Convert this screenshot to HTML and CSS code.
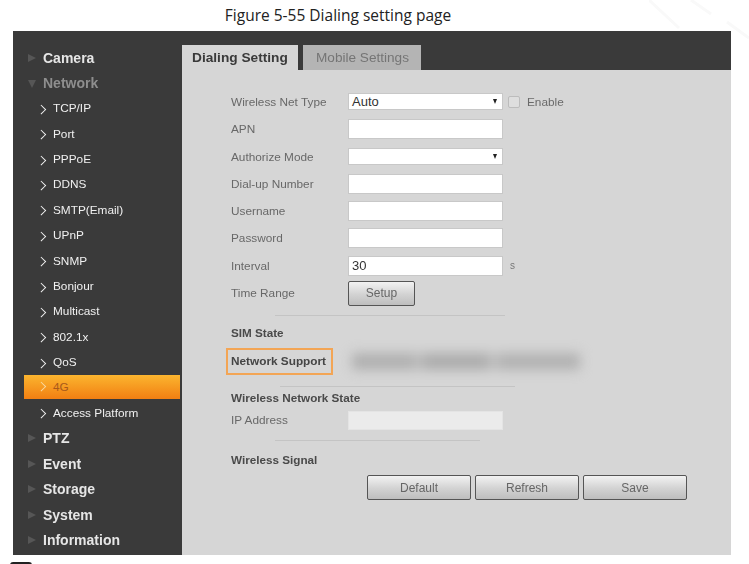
FILE: index.html
```html
<!DOCTYPE html>
<html lang="en">
<head>
<meta charset="utf-8">
<title>Dialing setting page</title>
<link rel="stylesheet" href="styles.css">
</head>
<body>
<svg class="watermark" width="100" height="40" viewBox="0 0 100 40" aria-hidden="true">
  <path d="M0 0L30 28M42 0L62 14M78 22L100 38" fill="none" stroke="#f9f9f9" stroke-width="3"/>
</svg>
<p class="caption">Figure 5-55 Dialing setting page</p>
<div class="frame">
  <nav class="sidebar">
    <div class="item top closed">Camera</div>
    <div class="item top open">Network</div>
    <div class="item sub">TCP/IP</div>
    <div class="item sub">Port</div>
    <div class="item sub">PPPoE</div>
    <div class="item sub">DDNS</div>
    <div class="item sub">SMTP(Email)</div>
    <div class="item sub">UPnP</div>
    <div class="item sub">SNMP</div>
    <div class="item sub">Bonjour</div>
    <div class="item sub">Multicast</div>
    <div class="item sub">802.1x</div>
    <div class="item sub">QoS</div>
    <div class="item sub active">4G</div>
    <div class="item sub">Access Platform</div>
    <div class="item top closed">PTZ</div>
    <div class="item top closed">Event</div>
    <div class="item top closed">Storage</div>
    <div class="item top closed">System</div>
    <div class="item top closed">Information</div>
  </nav>
  <main class="main">
    <div class="tabs">
      <div class="tab current">Dialing Setting</div>
      <div class="tab other">Mobile Settings</div>
    </div>
    <div class="panel">
      <div class="form">
        <div class="row"><span class="label">Wireless Net Type</span><span class="field select">Auto</span><span class="check"></span><span class="label-after">Enable</span></div>
        <div class="row"><span class="label">APN</span><span class="field"></span></div>
        <div class="row"><span class="label">Authorize Mode</span><span class="field select"></span></div>
        <div class="row"><span class="label">Dial-up Number</span><span class="field"></span></div>
        <div class="row"><span class="label">Username</span><span class="field"></span></div>
        <div class="row"><span class="label">Password</span><span class="field"></span></div>
        <div class="row"><span class="label">Interval</span><span class="field">30</span><span class="unit">s</span></div>
        <div class="row"><span class="label">Time Range</span><button class="btn setup" type="button">Setup</button></div>
      </div>
      <hr class="rule rule-a">
      <div class="heading sim">SIM State</div>
      <div class="support">
        <span class="highlight">Network Support</span>
        <span class="redacted"></span>
      </div>
      <hr class="rule rule-b">
      <div class="heading net">Wireless Network State</div>
      <div class="row ip"><span class="label">IP Address</span><span class="field disabled"></span></div>
      <hr class="rule rule-c">
      <div class="heading signal">Wireless Signal</div>
      <div class="actions">
        <button class="btn action" type="button">Default</button>
        <button class="btn action" type="button">Refresh</button>
        <button class="btn action" type="button">Save</button>
      </div>
    </div>
  </main>
</div>
<div class="fragment"></div>
</body>
</html>
```
FILE: styles.css
```css
html, body { margin: 0; padding: 0; height: 564px; overflow: hidden; background: #fff; }
body { font-family: "Liberation Sans", Arial, sans-serif; position: relative; }
.watermark { position: absolute; right: 0; top: 0; }
.caption {
  margin: 0; height: 31px; line-height: 30px; width: 676px; text-align: center;
  font-family: "Open Sans", sans-serif; font-size: 15.5px; color: #222;
}
.frame {
  display: flex; width: 718px; height: 524px; margin-left: 13px;
  filter: blur(0.5px);
}
.sidebar {
  width: 169px; flex: none; background: #3a3a3a; padding-top: 14.5px; box-sizing: border-box;
  display: flex; flex-direction: column;
}
.item { height: 25.4px; line-height: 25.4px; flex: none; position: relative; white-space: nowrap; }
.top { padding-left: 30px; font-size: 14px; font-weight: bold; color: #e6e6e6; }
.top.open { color: #8e8e8e; }
.top::before { content: ""; position: absolute; }
.closed::before {
  left: 15px; top: 8px; border-left: 8px solid #565656;
  border-top: 4.5px solid transparent; border-bottom: 4.5px solid transparent;
}
.open::before {
  left: 15px; top: 9px; border-top: 8px solid #565656;
  border-left: 4.5px solid transparent; border-right: 4.5px solid transparent;
}
.sub { padding-left: 40px; font-size: 11.8px; color: #f0f0f0; }
.sub::before {
  content: ""; position: absolute; left: 24.5px; top: 9.5px; width: 5.5px; height: 5.5px;
  border-top: 1.8px solid #f2f2f2; border-right: 1.8px solid #f2f2f2; transform: rotate(45deg);
}
.active {
  height: 24px; line-height: 24px; margin: -1px 2px 2.4px 11px; padding-left: 29px; color: #a8591a;
  background: linear-gradient(#fbb52f, #f27f12);
}
.active::before { left: 13.5px; top: 8.5px; border-color: #f8d9a0; }
.main { flex: 1; display: flex; flex-direction: column; }
.tabs { height: 39px; box-sizing: border-box; background: #3a3a3a; padding-top: 14px; display: flex; align-items: stretch; flex: none; }
.tab { font-size: 13.7px; line-height: 26px; box-sizing: border-box; }
.current { width: 116px; padding-left: 10px; background: #d6d6d6; color: #3a3a3a; font-weight: bold; }
.other { width: 118px; margin-left: 5px; padding-left: 13px; background: #b4b4b4; color: #757575; font-size: 13.6px; }
.panel { flex: 1; background: #d6d6d6; padding: 18.3px 0 0 49px; color: #666; font-size: 11.8px; }
.form { display: flex; flex-direction: column; }
.row { height: 27.3px; display: flex; align-items: center; flex: none; }
.label { width: 117px; flex: none; color: #686868; }
.field {
  width: 155px; height: 20px; box-sizing: border-box; background: #fff; flex: none;
  border: 1px solid #c8c8c8; padding-left: 3px; line-height: 18px; color: #333; font-size: 13px; position: relative;
}
.select { height: 17px; line-height: 15px; }
.select::after {
  content: ""; position: absolute; right: 5px; top: 5px;
  border-top: 5px solid #222; border-left: 2.5px solid transparent; border-right: 2.5px solid transparent;
}
.check { width: 10px; height: 10px; margin-left: 5px; border: 1px solid #bcbcbc; border-radius: 2px; background: #dedede; }
.label-after { margin-left: 7px; color: #6a6a6a; }
.unit { margin-left: 7px; color: #777; font-size: 10px; }
.btn {
  font-family: inherit; font-size: 12px; color: #666; padding: 0; box-sizing: border-box;
  border: 1px solid #555; border-radius: 2px; background: linear-gradient(#f2f2f2, #d2d2d2 55%, #bebebe);
}
.setup { width: 67px; height: 25px; }
.rule { border: 0; height: 1px; background: #c4c4c4; margin: 0; }
.rule-a { width: 230px; margin: 8px 0 0 44px; }
.heading { font-weight: bold; font-size: 11.7px; color: #4a4a4a; height: 14px; line-height: 14px; }
.sim { margin-top: 10.5px; }
.support { display: flex; align-items: center; margin: 8px 0 0 -5px; }
.highlight {
  width: 107px; height: 27px; box-sizing: border-box; border: 2px solid #f3a555;
  padding-left: 3px; line-height: 22px; font-weight: bold; color: #454545;
}
.redacted {
  width: 228px; height: 17px; margin-left: 19px; filter: blur(6px);
  background: linear-gradient(90deg, #b0b0b0 0 26%, #c0c0c0 29%, #acacac 33% 58%, #c2c2c2 62%, #b2b2b2 66% 100%);
}
.rule-b { width: 235px; margin: 11px 0 0 49px; }
.net { margin-top: 4px; }
.ip { height: 22px; margin-top: 4px; }
.disabled { height: 19px; background: #ebebeb; border-color: #e4e4e4; }
.rule-c { width: 205px; margin: 9px 0 0 44px; }
.signal { margin-top: 12px; }
.actions { display: flex; gap: 4px; margin: 8px 0 0 136px; }
.action { width: 104px; height: 25px; }
.fragment {
  width: 22px; height: 3px; margin: 7px 0 0 10px; box-sizing: border-box;
  border: 2px solid #222; border-bottom: 0; border-radius: 4px 4px 0 0;
}
```
